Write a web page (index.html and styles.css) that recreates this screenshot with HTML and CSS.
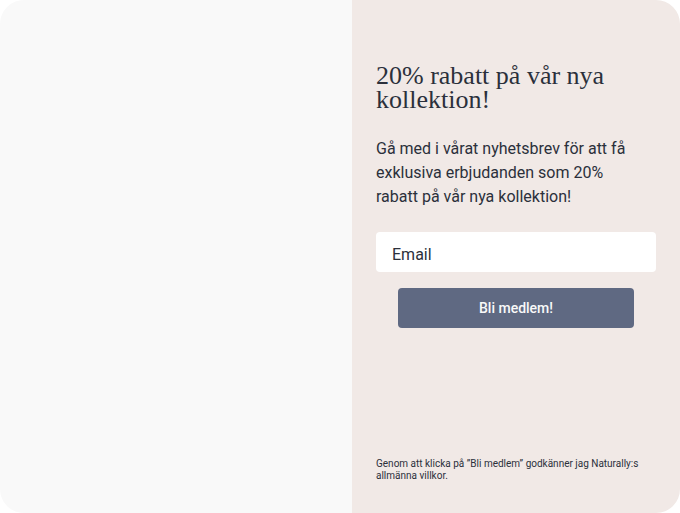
FILE: index.html
```html
<!DOCTYPE html>
<html lang="sv">
<head>
<meta charset="utf-8">
<meta name="viewport" content="width=device-width, initial-scale=1">
<title>Nyhetsbrev</title>
<link rel="stylesheet" href="styles.css">
</head>
<body>
<main class="popup">
  <div class="media"></div>
  <section class="content">
    <h1 class="title">20% rabatt på vår nya kollektion!</h1>
    <p class="lead">Gå med i vårat nyhetsbrev för att få exklusiva erbjudanden som 20% rabatt på vår nya kollektion!</p>
    <form class="signup">
      <input class="field" type="email" placeholder="Email" aria-label="Email">
      <button class="submit" type="submit">Bli medlem!</button>
    </form>
    <p class="terms">Genom att klicka på ”Bli medlem” godkänner jag Naturally:s allmänna villkor.</p>
  </section>
</main>
</body>
</html>
```
FILE: styles.css
```css
* {
  box-sizing: border-box;
}

body {
  margin: 0;
  background: #fff;
  color: #2b303b;
  font-family: Roboto, "Liberation Sans", sans-serif;
}

.popup {
  display: grid;
  grid-template-columns: 352fr 328fr;
  min-height: 100vh;
  border-radius: 24px;
  overflow: hidden;
}

.media {
  background: #f9f9f9;
}

.content {
  display: flex;
  flex-direction: column;
  padding: 64px 24px 31px;
  background: #f1e9e6;
}

.title {
  margin: 0 0 25px;
  font: 400 26px/24px "Liberation Serif", serif;
}

.lead {
  margin: 0 0 23px;
  padding-right: 16px;
  font-size: 16px;
  line-height: 24px;
}

.signup {
  display: flex;
  flex-direction: column;
  align-items: center;
  gap: 16px;
}

.field {
  width: 100%;
  height: 40px;
  padding: 4px 16px 0;
  border: 0;
  border-radius: 4px;
  background: #fff;
  color: inherit;
  font: inherit;
}

.field::placeholder {
  color: inherit;
  opacity: 1;
}

.submit {
  width: 84%;
  height: 40px;
  border: 0;
  border-radius: 4px;
  background: #5f6982;
  color: #f9f9f9;
  font: 500 14px/20px Roboto, "Liberation Sans", sans-serif;
}

.terms {
  margin: auto 0 0;
  font-size: 10px;
  line-height: 12px;
}
```
